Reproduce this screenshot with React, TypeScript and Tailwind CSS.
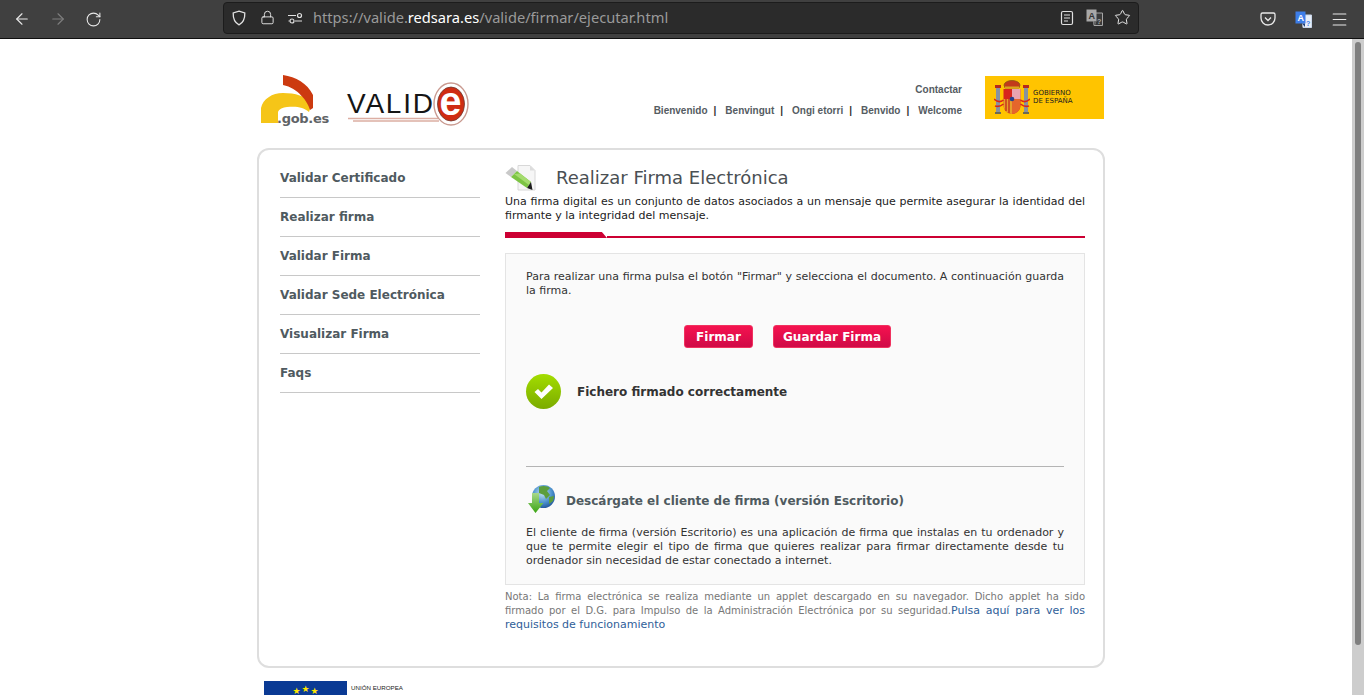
import { ArrowLeft, ArrowRight, RotateCw, Lock, Star, Menu } from "lucide-react";

const sans = "font-['DejaVu_Sans',sans-serif]";

const menuItems = [
  "Validar Certificado",
  "Realizar firma",
  "Validar Firma",
  "Validar Sede Electrónica",
  "Visualizar Firma",
  "Faqs",
];

const languages = ["Bienvenido", "Benvingut", "Ongi etorri", "Benvido", "Welcome"];

function TranslateIcon({ active }: { active?: boolean }) {
  return (
    <svg width="17" height="17" viewBox="0 0 17 17" className="shrink-0">
      <path d="M7 4h9.500v12.500H8z" fill={active ? "#e8eef8" : "#3a3a3a"} stroke={active ? "#c9d6ea" : "#a5a5a5"} />
      <path d="M0.500 0.500h10v12h-10z" fill={active ? "#3d7de8" : "#a8a8a8"} />
      <path d="M7 12.500l3 3.500v-3.500z" fill={active ? "#1d3f7c" : "#666"} />
      <text x="2.600" y="10" fontSize="9" fontWeight="700" fill={active ? "#fff" : "#333"} fontFamily="Liberation Sans, sans-serif">A</text>
      <text x="11" y="14.500" fontSize="7" fontWeight="700" fill={active ? "#3d7de8" : "#aaa"} fontFamily="Liberation Sans, sans-serif">?</text>
    </svg>
  );
}

function Toolbar() {
  return (
    <div className="h-[39px] shrink-0 flex items-center bg-[#404040] border-b border-[#0f0f0f] text-[#e8e8e8]">
      <div className="w-[223px] shrink-0 flex items-center pl-[13px] gap-[18px]">
        <ArrowLeft size={18} strokeWidth={1.5} />
        <ArrowRight size={18} strokeWidth={1.5} className="text-[#7e7e7e]" />
        <RotateCw size={17} strokeWidth={1.5} />
      </div>
      <div className="w-[916px] h-[32px] mb-[3px] shrink-0 flex items-center bg-[#2b2b2b] border border-[#1c1c1c] rounded-[4px] pl-[7px] pr-[7px]">
        <svg width="16" height="16" viewBox="0 0 16 16" fill="none" stroke="#e0e0e0" strokeWidth="1.300">
          <path d="M8 1.200l5.800 1.800c.2 5.600-1.400 9.600-5.800 11.800C3.600 12.600 2 8.600 2.200 3z" />
        </svg>
        <Lock size={15} strokeWidth={1.5} className="ml-[13px]" />
        <svg width="16" height="16" viewBox="0 0 16 16" fill="none" stroke="#e0e0e0" strokeWidth="1.200" className="ml-[12px]">
          <path d="M1 5.500h8M1.500 11h1M8 11h7" />
          <circle cx="12.500" cy="5.500" r="2" />
          <circle cx="5" cy="11" r="2" />
        </svg>
        <div className="ml-[10px] flex-1 text-[14.650px] text-[#9a9a9a] font-['Noto_Sans',sans-serif] whitespace-nowrap">
          https://valide.<span className="text-white">redsara.es</span>/valide/firmar/ejecutar.html
        </div>
        <svg width="16" height="16" viewBox="0 0 16 16" fill="none" stroke="#e0e0e0" strokeWidth="1.200">
          <rect x="2.500" y="1.500" width="11" height="13" rx="1.500" />
          <path d="M5 5h6M5 8h6M5 11h4" />
        </svg>
        <div className="ml-[11px]"><TranslateIcon /></div>
        <Star size={17} strokeWidth={1.400} className="ml-[11px]" />
      </div>
      <div className="flex-1 flex items-center justify-end pr-[15px]">
        <svg width="16" height="16" viewBox="0 0 16 16" fill="none" stroke="#e8e8e8" strokeWidth="1.300">
          <path d="M2.500 2h11A1.500 1.500 0 0 1 15 3.500V7a7 7 0 0 1-14 0V3.500A1.500 1.500 0 0 1 2.500 2z" />
          <path d="M5 6.500l3 3 3-3" />
        </svg>
        <div className="ml-[19px]"><TranslateIcon active /></div>
        <Menu size={19} strokeWidth={1.400} className="ml-[18px]" />
      </div>
    </div>
  );
}

function GobLogo() {
  return (
    <svg width="74" height="56" viewBox="0 0 74 56" className="shrink-0">
      <path d="M1 49V34C3 25 12 19 23 19c12 0 23 3 29 10l-3 9c-5-5-13-6-22-5-4 .5-8 2-9 5v11z" fill="#f5c518" />
      <path d="M23 1c13 2 24 8 30 20v13l-3 2C48 28 38 14 23 11z" fill="#cc3a10" />
      <text x="17" y="49" fontSize="13" fontWeight="700" fill="#5f6366" fontFamily="DejaVu Sans, sans-serif" letterSpacing="-0.300">.gob.es</text>
    </svg>
  );
}

function ValideLogo() {
  return (
    <svg width="126" height="48" viewBox="0 0 126 48" className="ml-[11px] shrink-0">
      <text x="2" y="33" fontSize="28" fill="#151515" fontFamily="Liberation Sans, sans-serif" textLength="86" lengthAdjust="spacing">VALID</text>
      <path d="M3 38.500h90M8 41h86" stroke="#dcaea3" strokeWidth="1.400" />
      <ellipse cx="106" cy="24" rx="17" ry="21" fill="#fff" stroke="#c99a90" strokeWidth="1.400" />
      <ellipse cx="106" cy="24" rx="13.500" ry="17" fill="#cf2c12" stroke="#6b3b33" strokeWidth="0.800" />
      <text x="94.500" y="35" fontSize="40" fontWeight="700" fill="#fff" fontFamily="Liberation Sans, sans-serif" textLength="22" lengthAdjust="spacingAndGlyphs">e</text>
    </svg>
  );
}

function GobiernoLogo() {
  return (
    <div className="w-[119px] h-[43px] mr-[1px] bg-[#ffc400] flex items-center pl-[9px] shrink-0">
      <svg width="36" height="37" viewBox="0 0 36 37" className="shrink-0">
        <rect x="2" y="8" width="4" height="26" fill="#8792a0" />
        <rect x="30" y="8" width="4" height="26" fill="#8792a0" />
        <rect x="1" y="6" width="6" height="3" fill="#b5291c" />
        <rect x="29" y="6" width="6" height="3" fill="#b5291c" />
        <rect x="1" y="33" width="6" height="2" fill="#6d6a52" />
        <rect x="29" y="33" width="6" height="2" fill="#6d6a52" />
        <path d="M10 6C11 0 25 0 26 6l-1 3H11z" fill="#c23a1b" stroke="#8a5a12" strokeWidth="0.800" />
        <rect x="11" y="7.500" width="14" height="2" fill="#d9a520" />
        <path d="M9.500 10h17v16c0 5-4 9-8.500 9s-8.500-4-8.500-9z" fill="#d8261c" />
        <rect x="18" y="10" width="8.500" height="10" fill="#e8a3b0" />
        <path d="M9.500 20H18v15c-4.500 0-8.500-4-8.500-9z" fill="#e6a12b" />
        <path d="M12 20v12M15 20v14" stroke="#c5281c" strokeWidth="1.300" />
        <path d="M18 20h8.500v6c0 5-4 9-8.500 9z" fill="#e5662b" />
        <circle cx="18" cy="20" r="2.300" fill="#27408b" />
        <path d="M0 20c4 4 7 3 9.500 1M36 20c-4 4-7 3-9.500 1M1 27c3 1 6 0 8.500-2M35 27c-3 1-6 0-8.500-2" stroke="#d8261c" strokeWidth="1.600" fill="none" />
      </svg>
      <div className="ml-[3px] mb-[2px] text-[7px] leading-[8px] text-[#222] font-['DejaVu_Sans',sans-serif] whitespace-nowrap">
        GOBIERNO
        <br />
        DE ESPAÑA
      </div>
    </div>
  );
}

function Header() {
  return (
    <div className="h-[109px] flex items-start pl-[3px] pt-[35px]">
      <GobLogo />
      <div className="mt-[6px]"><ValideLogo /></div>
      <div className="flex-1 flex flex-col items-end pt-[10px] pr-[23px] text-[10px] font-bold text-[#555c62] font-['Liberation_Sans',sans-serif]">
        <div className="h-[12px] leading-[12px]">Contactar</div>
        <div className="mt-[9px] h-[12px] leading-[12px] flex">
          {languages.map((l, i) => (
            <span key={l} className="flex">
              {l}
              {i < languages.length - 1 && <span className="text-[#333] ml-[6px] mr-[9px]">|</span>}
            </span>
          ))}
        </div>
      </div>
      <div className="mt-[2px]"><GobiernoLogo /></div>
    </div>
  );
}

function SignDocIcon() {
  return (
    <svg width="31" height="26" viewBox="0 0 31 26" className="shrink-0">
      <path d="M13 .5h12l5 5V25H13z" fill="#f6f6f6" stroke="#d8d8d8" />
      <path d="M25 .5v5h5z" fill="#dcdcdc" />
      <path d="M.5 8l6.500-6 5 4-6 6z" fill="#c9c9c9" />
      <path d="M6 12l6-6 14 11-4 6z" fill="#7cc443" />
      <path d="M9 9l6-.5 11 8.500-2 3z" fill="#a5dc6e" />
      <path d="M22 23l4-6 1.500 8z" fill="#1d1d1d" />
    </svg>
  );
}

function CheckIcon() {
  return (
    <div className="w-[35px] h-[35px] rounded-full bg-gradient-to-b from-[#a3dd00] to-[#7bab00] flex items-center justify-center shrink-0">
      <svg width="21" height="17" viewBox="0 0 21 17">
        <path d="M1.500 9l3.500-3 3.500 3.500L16 1.500l4 3.500L8.500 16z" fill="#fff" />
      </svg>
    </div>
  );
}

function GlobeIcon() {
  return (
    <svg width="30" height="30" viewBox="0 0 30 30" className="shrink-0">
      <defs>
        <radialGradient id="globe" cx="45%" cy="35%" r="70%">
          <stop offset="0%" stopColor="#c4e4f4" />
          <stop offset="60%" stopColor="#4a90cc" />
          <stop offset="100%" stopColor="#1d4f96" />
        </radialGradient>
        <linearGradient id="arrow" x1="0" y1="0" x2="0" y2="1">
          <stop offset="0%" stopColor="#a8d88a" />
          <stop offset="100%" stopColor="#3aa512" />
        </linearGradient>
      </defs>
      <circle cx="17.500" cy="11.500" r="11.500" fill="url(#globe)" />
      <path d="M13 2c4-2 9-1 11 1l-3 3 3 4-4 4-2-4-5-2z" fill="#5c9e3c" />
      <path d="M23 12l5-1-1 5-4 3z" fill="#5c9e3c" />
      <path d="M6 8h7v10h4.500L9.500 28 2 18h4z" fill="url(#arrow)" />
    </svg>
  );
}

export default function App() {
  return (
    <div className="h-[695px] overflow-hidden flex flex-col bg-white">
      <Toolbar />
      <div className="flex-1 flex min-h-0">
        <div className="flex-1 min-w-0 overflow-hidden">
          <div className={`w-[848px] ml-[257px] ${sans}`}>
            <Header />
            <div className="h-[520px] border-2 border-[#dedede] rounded-[12px] flex pl-[21px]">
              <div className="w-[200px] shrink-0 pt-[9px]">
                {menuItems.map((m) => (
                  <div key={m} className="h-[39px] flex items-center border-b border-[#c8c8c8] text-[12px] font-bold text-[#4f5a60]">
                    {m}
                  </div>
                ))}
              </div>
              <div className="w-[580px] ml-[25px] pt-[13px]">
                <div className="flex items-center h-[29px]">
                  <SignDocIcon />
                  <h1 className="ml-[20px] pb-[1px] text-[18px] text-[#4a4f53]">Realizar Firma Electrónica</h1>
                </div>
                <p className="mt-[3px] text-[11px] leading-[14px] text-[#222] text-justify">
                  Una firma digital es un conjunto de datos asociados a un mensaje que permite asegurar la identidad del firmante y la integridad del mensaje.
                </p>
                <div className="mt-[9px] h-[6px] flex items-end">
                  <div className="w-[102px] h-[6px] bg-[#cc0033] [clip-path:polygon(0_0,95%_0,100%_100%,0_100%)]" />
                  <div className="flex-1 h-[2px] bg-[#cc0033]" />
                </div>
                <div className="mt-[15px] h-[332px] border border-[#e4e4e4] bg-[#fafafa] px-[20px] pt-[16px]">
                  <p className="text-[11px] leading-[14px] text-[#333] text-justify">
                    Para realizar una firma pulsa el botón "Firmar" y selecciona el documento. A continuación guarda la firma.
                  </p>
                  <div className="mt-[27px] flex justify-center gap-[20px] pr-[15px]">
                    {["Firmar", "Guardar Firma"].map((b) => (
                      <button key={b} className="h-[23px] px-[9px] min-w-[69px] rounded-[3px] border border-[#f0325f] bg-gradient-to-b from-[#f5124f] to-[#d00a47] text-white text-[12px] font-bold">
                        {b}
                      </button>
                    ))}
                  </div>
                  <div className="mt-[26px] flex items-center">
                    <CheckIcon />
                    <span className="ml-[16px] text-[12px] font-bold text-[#333]">Fichero firmado correctamente</span>
                  </div>
                  <div className="mt-[57px] h-px bg-[#b4b4b4]" />
                  <div className="mt-[18px] flex items-center">
                    <GlobeIcon />
                    <span className="ml-[10px] pt-[2px] text-[12px] font-bold text-[#4f5a60]">Descárgate el cliente de firma (versión Escritorio)</span>
                  </div>
                  <p className="mt-[11px] text-[11px] leading-[14px] text-[#333] text-justify">
                    El cliente de firma (versión Escritorio) es una aplicación de firma que instalas en tu ordenador y que te permite elegir el tipo de firma que quieres realizar para firmar directamente desde tu ordenador sin necesidad de estar conectado a internet.
                  </p>
                </div>
                <p className="mt-[5px] text-[10px] leading-[14px] text-[#777] text-justify">
                  Nota: La firma electrónica se realiza mediante un applet descargado en su navegador. Dicho applet ha sido firmado por el D.G. para Impulso de la Administración Electrónica por su seguridad.
                  <a className="text-[11px] text-[#2f6099]">Pulsa aquí para ver los requisitos de funcionamiento</a>
                </p>
              </div>
            </div>
            <div className="mt-[13px] ml-[7px] flex items-start">
              <div className="w-[83px] h-[60px] bg-[#0a3a94] pt-[6px] flex justify-center gap-[1px] text-[#ffe600] text-[9px] leading-[9px]">
                <span>★</span><span className="-mt-[2px]">★</span><span>★</span>
              </div>
              <div className="ml-[4px] mt-[1px] text-[6.200px] font-['Liberation_Sans',sans-serif] text-[#222] leading-[12px]">UNIÓN EUROPEA</div>
            </div>
          </div>
        </div>
        <div className="w-[12px] shrink-0 bg-[#cdcdcd] flex justify-center pt-[3px]">
          <div className="w-[6px] h-[603px] rounded-full bg-[#7f7f7f]" />
        </div>
      </div>
    </div>
  );
}
